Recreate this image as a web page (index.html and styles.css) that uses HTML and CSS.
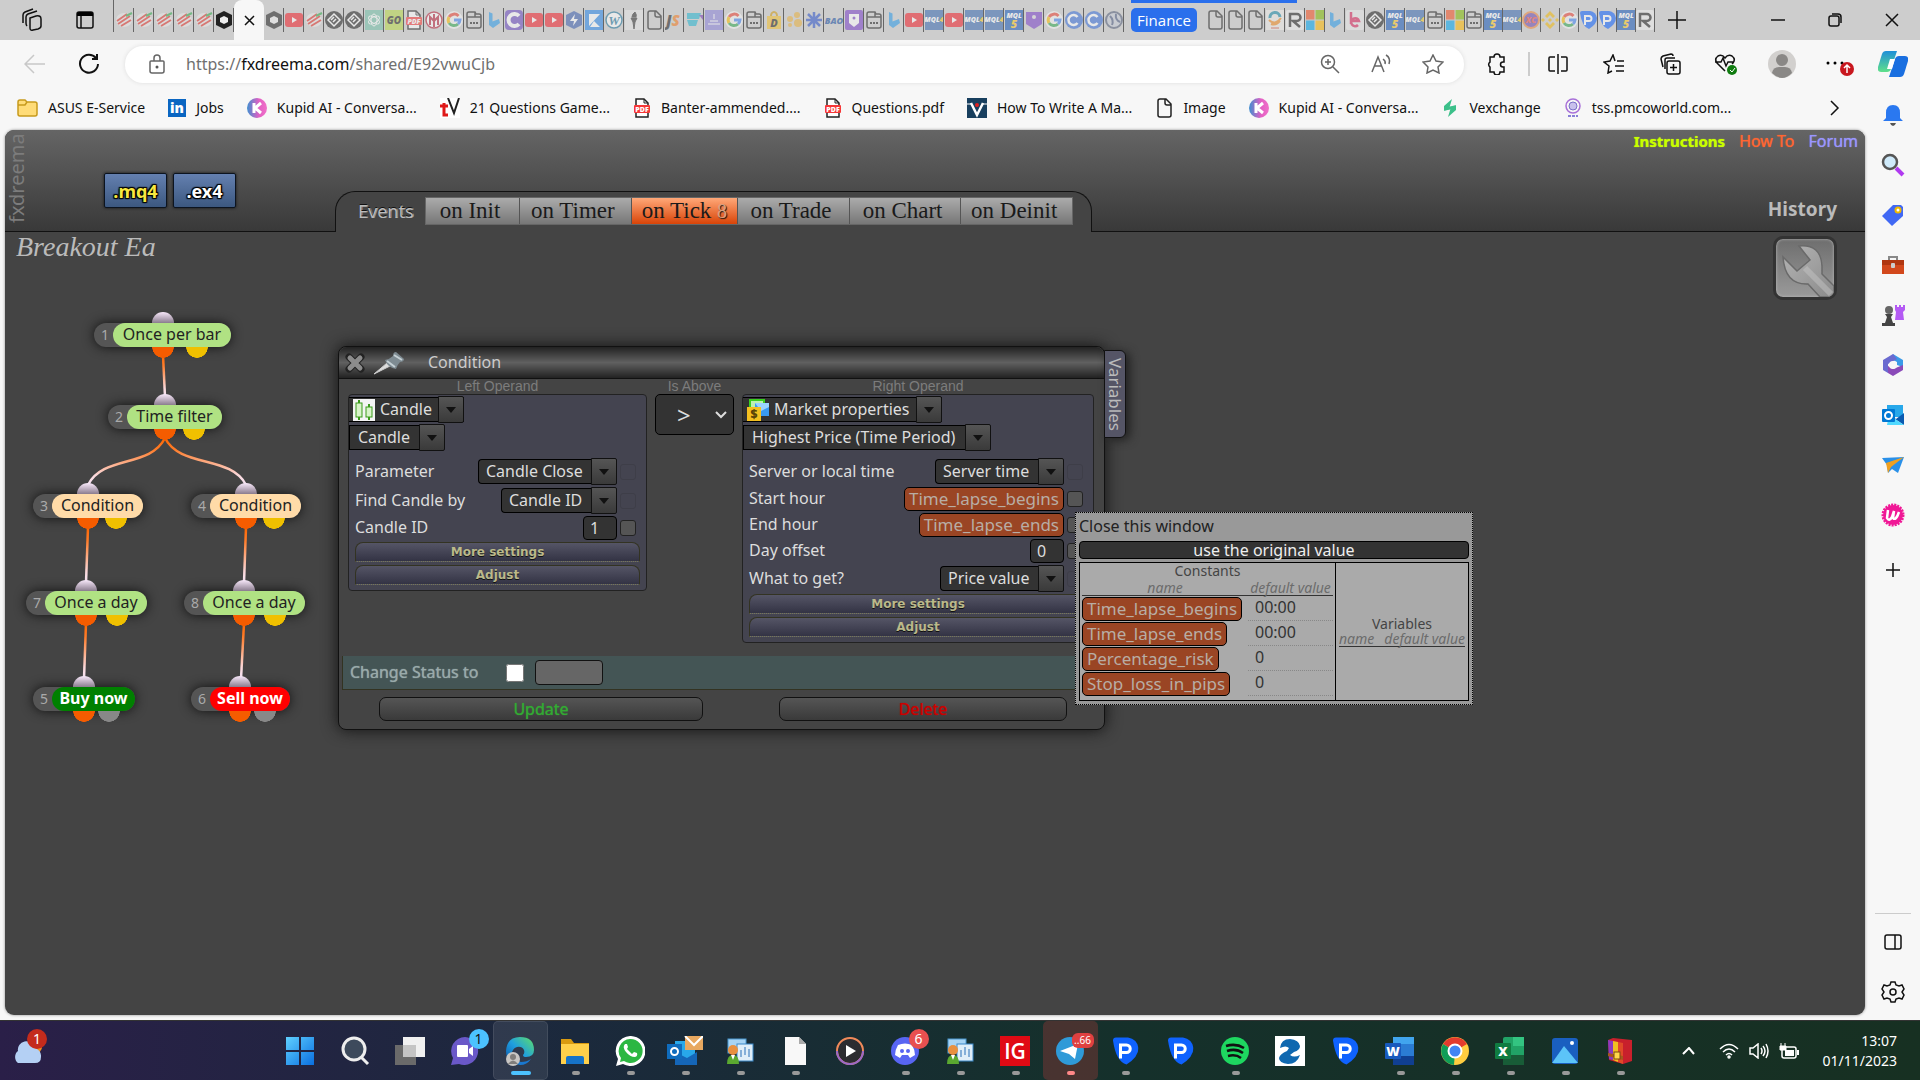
FILE: index.html
```html
<!DOCTYPE html>
<html lang="en">
<head>
<meta charset="utf-8">
<title>Breakout Ea - fxDreema</title>
<link rel="stylesheet" href="styles.css">
</head>
<body>
<svg class="defs" aria-hidden="true">
  <defs>
    <linearGradient id="g-wire" x1="0" y1="0" x2="0" y2="1"><stop offset="0" stop-color="#f60"/><stop offset=".25" stop-color="#ff7d2b"/><stop offset=".8" stop-color="#fbd9dc"/><stop offset="1" stop-color="#f6e6f8"/></linearGradient>
    <linearGradient id="g-kupid"><stop offset="0" stop-color="#3f8fd0"/><stop offset=".6" stop-color="#e35fc4"/><stop offset="1" stop-color="#f070c8"/></linearGradient>
    <linearGradient id="g-blue" x1="0" y1="0" x2="1" y2="1"><stop offset="0" stop-color="#5fd0ff"/><stop offset="1" stop-color="#0a6fe0"/></linearGradient>
    <linearGradient id="g-edge" x1="0" y1="1" x2="1" y2="0"><stop offset="0" stop-color="#0b50a8"/><stop offset=".5" stop-color="#1f9fe0"/><stop offset="1" stop-color="#5fe066"/></linearGradient>
    <linearGradient id="g-cop" x1="0" y1="0" x2="0" y2="1"><stop offset="0" stop-color="#1f8fd8"/><stop offset="1" stop-color="#5fe08a"/></linearGradient>
    <linearGradient id="g-steel" x1="0" y1="0" x2="1" y2="1"><stop offset="0" stop-color="#b5b5b5"/><stop offset="1" stop-color="#8a8a8a"/></linearGradient>
  </defs>
</svg>
<svg class="symbols" aria-hidden="true">
  <symbol id="t-strat" viewBox="0 0 18 20"><ellipse cx="9" cy="10" rx="8" ry="7" fill="#e8e8e8"/><path d="M2 11 12 4M3 14 15 6M6 16 16 10" stroke="#e0342c" stroke-width="2"/><path d="M11 6 17 3" stroke="#2fa84a" stroke-width="2"/></symbol>
  <symbol id="t-hex" viewBox="0 0 18 20"><path d="M9 1 17 5v10l-8 4-8-4V5z" fill="#222"/><path d="M9 6l4 2v4l-4 2-4-2V8z" fill="#eee"/></symbol>
  <symbol id="t-yt" viewBox="0 0 18 20"><rect y="3" width="18" height="14" rx="3" fill="#f0222a"/><path d="M7 7v6l5-3z" fill="#fff"/></symbol>
  <symbol id="t-feed" viewBox="0 0 18 20"><circle cx="9" cy="10" r="9" fill="#222"/><path d="M9 4 15 10 9 16 3 10zM6 10l3-3M8 12l3-3" fill="none" stroke="#fff" stroke-width="1.500"/></symbol>
  <symbol id="t-gpt" viewBox="0 0 18 20"><rect width="18" height="20" fill="#74c0a8"/><g fill="none" stroke="#fff"><ellipse cx="9" cy="10" rx="3" ry="6"/><ellipse cx="9" cy="10" rx="3" ry="6" transform="rotate(60 9 10)"/><ellipse cx="9" cy="10" rx="3" ry="6" transform="rotate(120 9 10)"/></g></symbol>
  <symbol id="t-go" viewBox="0 0 18 20"><rect width="18" height="20" fill="#b8d84a"/><text x="9" y="14" font-size="10" text-anchor="middle" class="b" fill="#222">GO</text></symbol>
  <symbol id="t-pdf" viewBox="0 0 18 20"><path d="M3 1h8l4 4v14H3z" fill="#fff" stroke="#222" stroke-width="1.500"/><path d="M11 1v4h4" fill="none" stroke="#222"/><rect x="1" y="7" width="16" height="8" rx="1" fill="#f63838"/><text x="9" y="14" font-size="7" text-anchor="middle" class="b" fill="#fff">PDF</text></symbol>
  <symbol id="t-mo" viewBox="0 0 18 20"><circle cx="9" cy="10" r="8" fill="#fff" stroke="#b8243c" stroke-width="1.500"/><path d="M5 15V7l4 4 4-4v8M9 4v13" fill="none" stroke="#b8243c" stroke-width="2"/></symbol>
  <symbol id="t-g" viewBox="0 0 18 20"><circle cx="9" cy="10" r="9" fill="#f4f4f4"/><g fill="none" stroke-width="3"><path d="M13.500 6A6 6 0 0 0 4 7" stroke="#ea4335"/><path d="M4 7a6 6 0 0 0 0 6" stroke="#fbbc05"/><path d="M4 13a6 6 0 0 0 9 1" stroke="#34a853"/><path d="M13 14a6 6 0 0 0 2-4H9" stroke="#4285f4"/></g></symbol>
  <symbol id="t-win" viewBox="0 0 18 20"><path d="M2 4q0-2 2-2h6l1 2h3q2 0 2 2v10q0 2-2 2H4q-2 0-2-2zM2 7h14M10 2v5" fill="none" stroke="#222" stroke-width="1.500"/><path d="M5 13h2M8 13h2M11 13h2" stroke="#222" stroke-width="2"/></symbol>
  <symbol id="t-bing" viewBox="0 0 18 20"><path d="M4 2l3.500 1.500v8L14 9l1 4-7 5-4-3z" fill="#2a9ae8"/></symbol>
  <symbol id="t-cc" viewBox="0 0 18 20"><rect width="18" height="20" rx="4" fill="#6a4ac0"/><path d="M14 6a6 6 0 1 0 0 8" fill="none" stroke="#fff" stroke-width="4"/></symbol>
  <symbol id="t-bolt" viewBox="0 0 18 20"><path d="M9 1 17 5v10l-8 4-8-4V5z" fill="#3c5fae"/><path d="M10 4 5 11h4l-1 5 5-7H9z" fill="#fff"/></symbol>
  <symbol id="t-z" viewBox="0 0 18 20"><rect width="18" height="20" fill="#2a88ea"/><path d="M4 4h11L4 16zM9 11l6 6H5z" fill="#fff"/></symbol>
  <symbol id="t-wp" viewBox="0 0 18 20"><circle cx="9" cy="10" r="8" fill="#fff" stroke="#21759b" stroke-width="1.500"/><text x="9" y="15" font-size="13" text-anchor="middle" class="sb" fill="#21759b">W</text></symbol>
  <symbol id="t-torch" viewBox="0 0 18 20"><rect width="18" height="20" fill="#e6e6e6"/><path d="M6 8h6l-2 4-1 7-1-7zM7 7q0-3 3-5 2 3 1 5z" fill="#333" stroke="#333"/></symbol>
  <symbol id="t-file" viewBox="0 0 18 20"><path d="M3 3q0-2 2-2h6l5 5v11q0 2-2 2H5q-2 0-2-2zM10 1v4q0 2 2 2h4" fill="none" stroke="#222" stroke-width="1.500"/></symbol>
  <symbol id="t-js" viewBox="0 0 18 20"><text x="1" y="16" font-size="15" class="b" fill="#222">J<tspan fill="#f07a20">S</tspan></text></symbol>
  <symbol id="t-teal" viewBox="0 0 18 20"><path d="M2 3h14l-2 6H2zM2 10h11l-2 6H4z" fill="#27b4d0"/><path d="M14 5h4v5z" fill="#7a3ab8"/></symbol>
  <symbol id="t-amz" viewBox="0 0 18 20"><rect width="18" height="20" fill="#8b83d8"/><path d="M3 14h12M5 11h8M9 4v5" stroke="#fff"/></symbol>
  <symbol id="t-bag" viewBox="0 0 18 20"><path d="M2 6h14v13H2z" fill="#f2c030"/><path d="M6 6a3 4 0 0 1 6 0" fill="none" stroke="#d09a10" stroke-width="2"/><text x="9" y="17" font-size="11" text-anchor="middle" class="b" fill="#222">D</text></symbol>
  <symbol id="t-dots" viewBox="0 0 18 20"><g fill="#e8b040"><circle cx="12" cy="5" r="3"/><circle cx="5" cy="9" r="3"/><circle cx="13" cy="13" r="4"/><circle cx="5" cy="15" r="2"/></g></symbol>
  <symbol id="t-snow" viewBox="0 0 18 20"><path d="M9 2v16M1 10h16M3 4l12 12M15 4 3 16" stroke="#2f55c8" stroke-width="2.500"/></symbol>
  <symbol id="t-bao" viewBox="0 0 18 20"><text x="9" y="14" font-size="9" text-anchor="middle" class="b" fill="#1a50a0">BAO</text></symbol>
  <symbol id="t-badge" viewBox="0 0 18 20"><rect width="18" height="20" rx="2" fill="#7a42c8"/><path d="M4 4h10v9l-5 4-5-4z" fill="#fff"/><circle cx="9" cy="8" r="1.500" fill="#7a42c8"/></symbol>
  <symbol id="t-badge2" viewBox="0 0 18 20"><path d="M1 2h16v12l-8 5-8-5z" fill="#7a42c8"/><circle cx="9" cy="7" r="2" fill="#ddd"/></symbol>
  <symbol id="t-mql4" viewBox="0 0 18 20"><rect width="18" height="20" fill="#3a6ab0"/><text x="9" y="12" font-size="7" text-anchor="middle" class="b" fill="#fff">MQL<tspan fill="#ffc820">4</tspan></text></symbol>
  <symbol id="t-mql5" viewBox="0 0 18 20"><rect width="18" height="20" fill="#1a5ab8"/><text x="9" y="8" font-size="7" text-anchor="middle" class="b" fill="#fff">MQL</text><text x="9" y="18" font-size="11" text-anchor="middle" class="b" fill="#ffc820">5</text></symbol>
  <symbol id="t-c" viewBox="0 0 18 20"><circle cx="9" cy="10" r="9" fill="#3a70d8"/><path d="M12.500 7a5 5 0 1 0 0 6" fill="none" stroke="#fff" stroke-width="2.500"/></symbol>
  <symbol id="t-globe" viewBox="0 0 18 20"><circle cx="9" cy="10" r="8" fill="#c4cad6" stroke="#55607a" stroke-width="2"/><path d="M5 6q4 4 2 9M11 4q-1 6 4 8" fill="none" stroke="#4b5a80" stroke-width="2"/></symbol>
  <symbol id="t-swirl" viewBox="0 0 18 20"><rect width="18" height="20" fill="#ecebe8"/><path d="M4 8a5 5 0 0 1 10-1" fill="none" stroke="#1a8aa8" stroke-width="3"/><path d="M3 10q6 6 12-2M5 14q5 2 9-3" fill="none" stroke="#f08a20" stroke-width="2"/><path d="M5 18h8" stroke="#d04a30"/></symbol>
  <symbol id="t-r" viewBox="0 0 18 20"><rect width="18" height="20" rx="2" fill="#eee"/><path d="M4 17V4h7a3.500 3.500 0 0 1 0 7H7l7 6" fill="none" stroke="#222" stroke-width="2.500"/></symbol>
  <symbol id="t-ms" viewBox="0 0 18 20"><path d="M0 0h8.500v9.500H0z" fill="#f25022"/><path d="M9.500 0H18v9.500H9.500z" fill="#7fba00"/><path d="M0 10.500h8.500V20H0z" fill="#00a4ef"/><path d="M9.500 10.500H18V20H9.500z" fill="#ffb900"/></symbol>
  <symbol id="t-e" viewBox="0 0 18 20"><rect width="18" height="20" rx="2" fill="#e8e8e8"/><path d="M5 2v12M6 11h7a4 4 0 1 0-1 4" fill="none" stroke="#d8245a" stroke-width="2.500"/></symbol>
  <symbol id="t-xc" viewBox="0 0 18 20"><circle cx="9" cy="10" r="8" fill="#6a4ab0" stroke="#f0883a" stroke-width="2"/><text x="9" y="13" font-size="8" text-anchor="middle" class="b" fill="#f04a3a">XC</text></symbol>
  <symbol id="t-bnb" viewBox="0 0 18 20"><path d="M9 1l5 5-2 2-3-3-3 3-2-2zM9 19l5-5-2-2-3 3-3-3-2 2zM9 8l2 2-2 2-2-2zM2 8l2 2-2 2-2-2zM16 8l2 2-2 2-2-2z" fill="#f0b90b"/></symbol>
  <symbol id="t-p" viewBox="0 0 18 20"><path d="M1 3q0-2 2-2h8q6 1 7 7 0 6-8 11Q3 17 1 3z" fill="#0f62fe"/><path d="M6 15V6h4a2.500 2.500 0 0 1 0 5H7" fill="none" stroke="#fff" stroke-width="2"/></symbol>
</svg>

<div class="browser">
  <nav class="tabs" aria-label="Tabs">
    <button class="tool" aria-label="Workspaces"><svg width="22" height="24" viewBox="0 0 22 24"><path d="M9 10 15 8q5-1 5 3v7q0 2-3 3l-5 1q-3 1-3-2zM6 18q-1-1-1-3V9q0-2 2-3l9-3M2 15V7q0-2 2-3l8-3" class="ln"/></svg></button>
    <button class="tool" aria-label="Tab actions"><svg width="20" height="20" viewBox="0 0 20 20"><rect x="2" y="2" width="16" height="16" rx="2" class="ln"/><path d="M2 6V4q0-2 2-2h12q2 0 2 2v2z"/><path d="M6 6v12" class="ln"/></svg></button>
    <div class="strip lead">
      <i><svg><use href="#t-strat"/></svg></i><i><svg><use href="#t-strat"/></svg></i><i><svg><use href="#t-strat"/></svg></i><i><svg><use href="#t-strat"/></svg></i><i><svg><use href="#t-strat"/></svg></i><i class="vivid"><svg><use href="#t-hex"/></svg></i>
    </div>
    <div class="active"><button aria-label="Close tab"><svg width="11" height="11" viewBox="0 0 11 11"><path d="M1 1l9 9M10 1l-9 9" class="ln"/></svg></button></div>
    <div class="strip">
      <i><svg><use href="#t-hex"/></svg></i><i><svg><use href="#t-yt"/></svg></i><i><svg><use href="#t-strat"/></svg></i><i><svg><use href="#t-feed"/></svg></i><i><svg><use href="#t-feed"/></svg></i><i><svg><use href="#t-gpt"/></svg></i><i><svg><use href="#t-go"/></svg></i><i><svg><use href="#t-pdf"/></svg></i><i><svg><use href="#t-mo"/></svg></i><i><svg><use href="#t-g"/></svg></i><i><svg><use href="#t-win"/></svg></i><i><svg><use href="#t-bing"/></svg></i><i><svg><use href="#t-cc"/></svg></i><i><svg><use href="#t-yt"/></svg></i><i><svg><use href="#t-yt"/></svg></i><i><svg><use href="#t-bolt"/></svg></i><i><svg><use href="#t-z"/></svg></i><i><svg><use href="#t-wp"/></svg></i><i><svg><use href="#t-torch"/></svg></i><i><svg><use href="#t-file"/></svg></i><i><svg><use href="#t-js"/></svg></i><i><svg><use href="#t-teal"/></svg></i><i><svg><use href="#t-amz"/></svg></i><i><svg><use href="#t-g"/></svg></i><i><svg><use href="#t-win"/></svg></i><i><svg><use href="#t-bag"/></svg></i><i><svg><use href="#t-dots"/></svg></i><i><svg><use href="#t-snow"/></svg></i><i><svg><use href="#t-bao"/></svg></i><i><svg><use href="#t-badge"/></svg></i><i><svg><use href="#t-win"/></svg></i><i><svg><use href="#t-bing"/></svg></i><i><svg><use href="#t-yt"/></svg></i><i><svg><use href="#t-mql4"/></svg></i><i><svg><use href="#t-yt"/></svg></i><i><svg><use href="#t-mql4"/></svg></i><i><svg><use href="#t-mql4"/></svg></i><i><svg><use href="#t-mql5"/></svg></i><i><svg><use href="#t-badge2"/></svg></i><i><svg><use href="#t-g"/></svg></i><i><svg><use href="#t-c"/></svg></i><i><svg><use href="#t-c"/></svg></i><i><svg><use href="#t-globe"/></svg></i>
    </div>
    <div class="group">
      <button class="chip">Finance</button>
      <div class="strip"><i><svg><use href="#t-file"/></svg></i><i><svg><use href="#t-file"/></svg></i><i><svg><use href="#t-file"/></svg></i><i><svg><use href="#t-swirl"/></svg></i></div>
    </div>
    <div class="strip"><i><svg><use href="#t-r"/></svg></i><i><svg><use href="#t-ms"/></svg></i><i><svg><use href="#t-bing"/></svg></i><i><svg><use href="#t-e"/></svg></i><i><svg><use href="#t-feed"/></svg></i><i><svg><use href="#t-mql5"/></svg></i><i><svg><use href="#t-mql4"/></svg></i><i><svg><use href="#t-win"/></svg></i><i><svg><use href="#t-ms"/></svg></i></div>
    <div class="strip slim"><i><svg><use href="#t-win"/></svg></i><i><svg><use href="#t-mql5"/></svg></i><i><svg><use href="#t-mql4"/></svg></i><i><svg><use href="#t-xc"/></svg></i><i><svg><use href="#t-bnb"/></svg></i><i><svg><use href="#t-g"/></svg></i><i><svg><use href="#t-p"/></svg></i><i><svg><use href="#t-p"/></svg></i><i><svg><use href="#t-mql5"/></svg></i><i><svg><use href="#t-r"/></svg></i></div>
    <button class="tool plus" aria-label="New tab"><svg width="18" height="18" viewBox="0 0 18 18"><path d="M9 0v18M0 9h18" class="ln"/></svg></button>
    <div class="wincontrols">
      <button aria-label="Minimize"><svg width="14" height="14" viewBox="0 0 14 14"><path d="M0 7h14" class="ln"/></svg></button>
      <button aria-label="Restore"><svg width="14" height="14" viewBox="0 0 14 14"><rect x="1" y="3" width="10" height="10" rx="2" class="ln"/><path d="M4 1h6q3 0 3 3v6" class="ln"/></svg></button>
      <button aria-label="Close"><svg width="14" height="14" viewBox="0 0 14 14"><path d="M1 1l12 12M13 1 1 13" class="ln"/></svg></button>
    </div>
  </nav>

  <div class="toolbar">
    <button class="nav" aria-label="Back"><svg width="22" height="20" viewBox="0 0 22 20"><path d="M21 10H1M10 1l-9 9 9 9" class="ln"/></svg></button>
    <button class="nav" aria-label="Refresh"><svg width="22" height="22" viewBox="0 0 22 22"><path d="M18 5A9 9 0 1 0 20 11M19 1v5h-5" class="ln"/></svg></button>
    <div class="address">
      <svg width="16" height="20" viewBox="0 0 16 20"><path d="M2 7h12q1 0 1 1v9q0 2-2 2H3q-2 0-2-2V8q0-1 1-1zM5 7V4a3 3 0 0 1 6 0v3" class="ln gray"/><circle cx="8" cy="13" r="1.500" fill="#555"/></svg>
      <label class="url" for="url">https://<b>fxdreema.com</b>/shared/E92vwuCjb</label>
      <input id="url">
      <svg width="20" height="20" viewBox="0 0 20 20"><path d="M13 13l6 6M8 5v6M5 8h6" class="ln gray"/><circle cx="8" cy="8" r="6.500" class="ln gray"/></svg>
      <svg width="22" height="20" viewBox="0 0 22 20"><path d="M2 18 8 3l6 15M4 12h8M13 5q3 2 2 5M16 1q5 3 3 9" class="ln gray"/></svg>
      <svg width="22" height="20" viewBox="0 0 22 20"><path d="M11 1l3 6 7 1-5 5 1 6-6-3-6 3 1-6-5-5 7-1z" class="ln gray"/></svg>
    </div>
    <button class="ext" aria-label="Extensions"><svg width="22" height="22" viewBox="0 0 22 22"><path d="M5 4h4a3 3 0 0 1 6 0h4v5h-1a2 2 0 0 0 0 5h1v5h-4a3 3 0 0 1-6 0H5v-5a3 3 0 0 1 0-5z" class="ln"/></svg></button>
    <button aria-label="Split screen"><svg width="22" height="20" viewBox="0 0 22 20"><path d="M8 3H3q-1 0-1 1v12q0 1 1 1h5M14 3h5q1 0 1 1v12q0 1-1 1h-5M11 0v20" class="ln"/></svg></button>
    <button aria-label="Favorites"><svg width="22" height="20" viewBox="0 0 22 20"><path d="M12 7l-2-6-3 6-6 1 5 4-1 7 4-2M14 7h7M12 12h9M13 17h8" class="ln"/></svg></button>
    <button aria-label="Collections"><svg width="22" height="22" viewBox="0 0 22 22"><path d="M4 14 2 6q0-2 2-3l8-2q2 0 2 2M6 16V7q0-2 2-2h8" class="ln"/><rect x="8" y="8" width="13" height="13" rx="2" class="ln"/><path d="M14.500 11v7M11 14.500h7" class="ln"/></svg></button>
    <button aria-label="Browser essentials"><svg width="24" height="22" viewBox="0 0 24 22"><path d="M11 18 3 10q-3-4 1-7 4-2 7 2 3-4 7-2 4 3 1 7l-1 1M1 9h6l2-4 3 8 2-4h6" class="ln"/><circle cx="18" cy="17" r="5" fill="#107c10"/><path d="M16 17l2 2 3-4" stroke="#fff" fill="none"/></svg></button>
    <button aria-label="Profile"><svg width="28" height="28" viewBox="0 0 28 28"><circle cx="14" cy="14" r="14" fill="#d2d0ce"/><circle cx="14" cy="10" r="6" fill="#8a8886"/><path d="M4 23q1-6 7-6h6q6 0 7 6-5 5-10 5T4 23z" fill="#8a8886"/></svg></button>
    <button aria-label="Settings and more"><svg width="32" height="24" viewBox="0 0 32 24"><circle cx="6" cy="11" r="1.500"/><circle cx="13" cy="11" r="1.500"/><circle cx="20" cy="11" r="1.500"/><circle cx="25" cy="17" r="7" fill="#c8171e"/><path d="M25 21v-8M22 16l3-3 3 3" stroke="#fff" stroke-width="1.500" fill="none"/></svg></button>
    <button aria-label="Copilot"><svg width="30" height="28" viewBox="0 0 30 28"><path d="M8 1h11l-6 18q-1 3-4 3H3q-4 0-3-5L4 4q1-3 4-3z" fill="url(#g-cop)"/><path d="M22 27H11l6-18q1-3 4-3h6q4 0 3 5l-4 13q-1 3-4 3z" fill="#1a6fe0"/><path d="M12 9h5l-3 10h-5z" fill="#fff"/></svg></button>
  </div>

  <div class="bookmarks">
    <a href="#"><svg width="21" height="18" viewBox="0 0 21 18"><path d="M1 3q0-2 2-2h5l2 2h8q2 0 2 2v10q0 2-2 2H3q-2 0-2-2z" fill="#ffdc78" stroke="#c79a1c" stroke-width="1.500"/><path d="M1 6h7l2-3" fill="none" stroke="#c79a1c" stroke-width="1.500"/></svg>ASUS E-Service</a>
    <a href="#"><svg width="18" height="18" viewBox="0 0 18 18"><rect width="18" height="18" fill="#0a66c2"/><text x="9" y="14" font-size="14" text-anchor="middle" class="b" fill="#fff">in</text></svg>Jobs</a>
    <a href="#"><svg width="20" height="20" viewBox="0 0 20 20"><circle cx="10" cy="10" r="10" fill="url(#g-kupid)"/><path d="M7 5v10M14 5l-6 5 6 5" stroke="#fff" stroke-width="3" fill="none"/></svg>Kupid AI - Conversa...</a>
    <a href="#"><svg width="20" height="20" viewBox="0 0 20 20"><rect width="20" height="20" fill="#fff"/><path d="M4 5v12h4M0 8h8" stroke="#e01a1a" stroke-width="3" fill="none"/><path d="M8 0l6 15L19 0" stroke="#222" stroke-width="2" fill="none"/></svg>21 Questions Game...</a>
    <a href="#"><svg width="18" height="20"><use href="#t-pdf"/></svg>Banter-ammended....</a>
    <a href="#"><svg width="18" height="20"><use href="#t-pdf"/></svg>Questions.pdf</a>
    <a href="#"><svg width="20" height="20" viewBox="0 0 20 20"><rect width="20" height="20" fill="#183f5e"/><path d="M4 5l6 12 6-12" stroke="#fff" stroke-width="2.500" fill="none"/><path d="M0 6h5M15 6h5" stroke="#fff"/><circle cx="10" cy="7" r="2" fill="#e02020"/></svg>How To Write A Ma...</a>
    <a href="#"><svg width="18" height="20"><use href="#t-file"/></svg>Image</a>
    <a href="#"><svg width="20" height="20" viewBox="0 0 20 20"><circle cx="10" cy="10" r="10" fill="url(#g-kupid)"/><path d="M7 5v10M14 5l-6 5 6 5" stroke="#fff" stroke-width="3" fill="none"/></svg>Kupid AI - Conversa...</a>
    <a href="#"><svg width="18" height="20" viewBox="0 0 18 20"><path d="M11 1 3 8v5l5-2zM7 19l8-7V7l-5 2z" fill="#3cc08a"/><path d="M4 11l10-2" stroke="#3cc08a" stroke-width="3"/></svg>Vexchange</a>
    <a href="#"><svg width="18" height="20" viewBox="0 0 18 20"><circle cx="9" cy="8" r="7" fill="none" stroke="#a870d8" stroke-width="1.500"/><circle cx="9" cy="8" r="4" fill="#c8c0ec" stroke="#7a70c8"/><path d="M4 18h10" stroke="#8a80d8" stroke-width="2" stroke-dasharray="3 1"/></svg>tss.pmcoworld.com...</a>
    <button aria-label="More bookmarks"><svg width="10" height="16" viewBox="0 0 10 16"><path d="M1 1l7 7-7 7" class="ln"/></svg></button>
  </div>

  <div class="body">
    <main class="page">
      <header class="head">
        <div class="left">
          <span class="brand">fxdreema</span>
          <button class="dl yellow">.mq4</button><button class="dl">.ex4</button>
        </div>
        <div class="events">
          <span class="cap">Events</span>
          <div class="evs"><button>on Init</button><button class="w2">on Timer</button><button class="on w2">on Tick <small>8</small></button><button class="w2">on Trade</button><button class="w2">on Chart</button><button class="w2">on Deinit</button></div>
        </div>
        <div class="right">
          <nav class="links"><a href="#" class="ins">Instructions</a><a href="#" class="how">How To</a><a href="#" class="forum">Forum</a></nav>
          <a href="#" class="history">History</a>
        </div>
      </header>

      <section class="canvas">
        <div class="canvashead">
          <h1>Breakout Ea</h1>
          <button class="wrench" aria-label="Settings"><svg width="58" height="58" viewBox="0 0 58 58"><path d="M23 7q22-2 23 20l0 8 12 12v11H44L32 45Q9 46 7 18l14 14 13-11z" fill="url(#g-steel)" stroke="#6a6a6a" stroke-width="1.500"/><path d="M29 29l26 26" stroke="#c4c4c4" stroke-width="6" opacity=".5"/></svg></button>
        </div>

        <svg class="wires" width="330" height="480" viewBox="0 0 330 480" fill="none" stroke="url(#g-wire)" stroke-width="2.500">
          <path d="M158 122 160 164"/><path d="M160 205C145 235 98 222 83 252"/><path d="M160 205C175 235 226 222 241 252"/>
          <path d="M83 294 81 350"/><path d="M241 294 239 350"/><path d="M81 390 79 446"/><path d="M239 390 236 446"/>
        </svg>
        <div class="node n1"><em>1</em><span>Once per bar</span></div>
        <div class="node n2"><em>2</em><span>Time filter</span></div>
        <div class="node n3 cond"><em>3</em><span>Condition</span></div>
        <div class="node n4 cond"><em>4</em><span>Condition</span></div>
        <div class="node n7"><em>7</em><span>Once a day</span></div>
        <div class="node n8"><em>8</em><span>Once a day</span></div>
        <div class="node n5 buy"><em>5</em><span>Buy now</span></div>
        <div class="node n6 sell"><em>6</em><span>Sell now</span></div>

        <section class="dialog">
          <button class="vars">Variables</button>
          <div class="bar">
            <button aria-label="Close"><svg width="20" height="20" viewBox="0 0 20 20"><path d="M4 4l12 12M16 4 4 16" stroke="#222" stroke-width="7" stroke-linecap="round"/><path d="M5 5l10 10M15 5 5 15" stroke="#8c8c8c" stroke-width="5" stroke-linecap="round"/></svg></button>
            <button aria-label="Pin"><svg width="32" height="24" viewBox="0 0 32 24"><path d="M1 23 14 12l3 3z" fill="#ddd" stroke="#ccc"/><path d="M12 9q5-1 8-4 0-4 3-4l8 7q0 3-4 3-3 3-4 7-8-1-11-9z" fill="#7e8b92"/><path d="M14 10l8 6M21 4l8 5" stroke="#c5d0d5" stroke-width="2"/></svg></button>
            <h2>Condition</h2>
          </div>
          <div class="cols">
            <div class="operand">
              <h3>Left Operand</h3>
              <div class="panel">
                <div class="pick src"><svg width="22" height="22" viewBox="0 0 22 22"><rect width="22" height="22" fill="#f4f4f4"/><path d="M6 1v20M16 5v16" stroke="#3a9a1a" stroke-width="2"/><rect x="3" y="4" width="6" height="14" fill="#d8f4c8" stroke="#3a9a1a"/><rect x="13" y="8" width="6" height="10" fill="#d8f4c8" stroke="#3a9a1a"/></svg><select aria-label="Source"><option>Candle</option></select><i></i></div>
                <div class="pick"><select aria-label="Type"><option>Candle</option></select><i></i></div>
                <div class="rows">
                  <div class="row"><label for="p1">Parameter</label><div class="pick round"><select id="p1"><option>Candle Close</option></select><i></i></div><button class="sq off" aria-label="Variable"></button></div>
                  <div class="row"><label for="p2">Find Candle by</label><div class="pick round"><select id="p2"><option>Candle ID</option></select><i></i></div><button class="sq off" aria-label="Variable"></button></div>
                  <div class="row"><label for="p3">Candle ID</label><input id="p3" class="num" value="1"><button class="sq" aria-label="Variable"></button></div>
                  <button class="more">More settings</button>
                  <button class="more">Adjust</button>
                </div>
              </div>
            </div>
            <div class="operator">
              <h3>Is Above</h3>
              <div class="cmp"><select aria-label="Operator"><option>&gt;</option></select><svg width="12" height="8" viewBox="0 0 12 8"><path d="M1 1l5 5 5-5" stroke="#ddd" stroke-width="2" fill="none"/></svg></div>
            </div>
            <div class="operand wide">
              <h3>Right Operand</h3>
              <div class="panel">
                <div class="pick src"><svg width="22" height="22" viewBox="0 0 22 22"><rect x="3" y="1" width="14" height="12" fill="#bdf0b0" stroke="#3ad020" stroke-width="2"/><rect x="8" y="4" width="14" height="13" fill="#3a9af0"/><path d="M8 4h14v4l-8 4z" fill="#9ad4ff"/><rect x="0" y="8" width="14" height="14" fill="#f4c020"/><text x="7" y="19" font-size="12" text-anchor="middle" class="b" fill="#5a4408">$</text></svg><select aria-label="Source"><option>Market properties</option></select><i></i></div>
                <div class="pick"><select aria-label="Type"><option>Highest Price (Time Period)</option></select><i></i></div>
                <div class="rows">
                  <div class="row"><label for="q1">Server or local time</label><div class="pick round"><select id="q1"><option>Server time</option></select><i></i></div><button class="sq off" aria-label="Variable"></button></div>
                  <div class="row"><label for="q2">Start hour</label><button id="q2" class="tag">Time_lapse_begins</button><button class="sq" aria-label="Variable"></button></div>
                  <div class="row"><label for="q3">End hour</label><button id="q3" class="tag">Time_lapse_ends</button><button class="sq" aria-label="Variable"></button></div>
                  <div class="row"><label for="q4">Day offset</label><input id="q4" class="num" value="0"><button class="sq" aria-label="Variable"></button></div>
                  <div class="row"><label for="q5">What to get?</label><div class="pick round"><select id="q5"><option>Price value</option></select><i></i></div><button class="sq off" aria-label="Variable"></button></div>
                  <button class="more">More settings</button>
                  <button class="more">Adjust</button>
                </div>
              </div>
            </div>
          </div>
          <div class="status"><label for="st">Change Status to</label><input type="checkbox" id="st"><input class="stval" aria-label="Status"></div>
          <div class="acts"><button class="upd">Update</button><button class="del">Delete</button></div>
        </section>

        <section class="popup">
          <a href="#">Close this window</a>
          <button>use the original value</button>
          <div class="tables">
            <table class="consts">
              <caption>Constants</caption>
              <thead><tr><th>name</th><th>default value</th></tr></thead>
              <tbody>
                <tr><td><button class="tag">Time_lapse_begins</button></td><td>00:00</td></tr>
                <tr><td><button class="tag">Time_lapse_ends</button></td><td>00:00</td></tr>
                <tr><td><button class="tag">Percentage_risk</button></td><td>0</td></tr>
                <tr><td><button class="tag">Stop_loss_in_pips</button></td><td>0</td></tr>
              </tbody>
            </table>
            <div class="varcol">
              <table><caption>Variables</caption><thead><tr><th>name</th><th>default value</th></tr></thead></table>
            </div>
          </div>
        </section>
      </section>
    </main>

    <aside class="side">
      <svg viewBox="0 0 24 24"><path d="M12 2q7 0 7 8v5l3 3H2l3-3v-5q0-8 7-8z" fill="#2a78f0"/><path d="M9 20h6q-1 3-3 3t-3-3z" fill="#555"/></svg>
      <svg viewBox="0 0 24 24"><circle cx="9" cy="9" r="7" fill="#cfeafa" stroke="#555" stroke-width="2.500"/><path d="M15 15l7 7" stroke="#b03af0" stroke-width="4"/></svg>
      <svg viewBox="0 0 24 24"><path d="M12 2h8l2 2v9L11 23 1 13z" fill="#4068f4"/><circle cx="17" cy="7" r="2.500" fill="#fff" stroke="#f0b800" stroke-width="2"/></svg>
      <svg viewBox="0 0 24 24"><path d="M8 7V4h8v3" fill="none" stroke="#888" stroke-width="2"/><path d="M1 7h22v14H1z" fill="#d2481c"/><path d="M1 7h22v5H1z" fill="#b03610"/><rect x="10" y="10" width="4" height="5" rx="1" fill="#ccc"/></svg>
      <svg viewBox="0 0 24 24"><path d="M14 2h2v2h2V2h2v2h2V2h2v5l-2 2 1 8h-9l1-8-1-2z" fill="#b45af4"/><circle cx="8" cy="7" r="4" fill="#666"/><path d="M4 11h8l-2 3 2 6h2v3H1v-3h3l2-6z" fill="#444"/></svg>
      <svg viewBox="0 0 24 24"><path d="M12 1l10 6v7l-6-2V9l-6-3z" fill="#3a9ae8"/><path d="M12 1 2 7v10l5 3V11l9-5z" fill="#6a6ad0"/><path d="M7 20l5 3 10-6v-5l-10 4-5-3z" fill="#8a4ab8"/><circle cx="12" cy="12" r="4" fill="#f7f7f7"/></svg>
      <svg viewBox="0 0 24 24"><rect x="6" y="2" width="16" height="12" fill="#28a8ea"/><path d="M8 12l15 10V10l-8 6z" fill="#0a5ab0"/><path d="M6 22h17L8 12z" fill="#50d9ff"/><rect x="1" y="6" width="13" height="13" rx="1" fill="#0078d4"/><circle cx="7.500" cy="12.500" r="3.500" fill="none" stroke="#fff" stroke-width="2"/></svg>
      <svg viewBox="0 0 24 24"><path d="M1 5l22-1-6 16-6-4-4 4-1-8z" fill="#2a90e8"/><path d="M5 10 23 4 10 14l-3 6z" fill="#f0a020"/></svg>
      <svg viewBox="0 0 24 24"><circle cx="12" cy="12" r="10" fill="#f01896" stroke="#f01896" stroke-width="3" stroke-dasharray="2 1"/><path d="M7 7 6 15q2 4 5-1l2-6-1 7q3 3 6-6" fill="none" stroke="#fff" stroke-width="2.500"/></svg>
      <svg class="add" viewBox="0 0 24 24"><path d="M12 5v14M5 12h14" class="ln"/></svg>
      <div class="bottom">
        <svg viewBox="0 0 24 24"><rect x="4" y="5" width="16" height="14" rx="2" class="ln"/><path d="M14 5v14" class="ln"/></svg>
        <svg viewBox="0 0 24 24"><circle cx="12" cy="12" r="3" class="ln"/><path d="M10 2h4l1 3 3 1 3-1 2 4-2 3 2 3-2 4-3-1-3 1-1 3h-4l-1-3-3-1-3 1-2-4 2-3-2-3 2-4 3 1 3-1z" class="ln"/></svg>
      </div>
    </aside>
  </div>
</div>

<footer class="taskbar">
  <div class="weather"><svg width="36" height="40" viewBox="0 0 36 40"><circle cx="24" cy="22" r="6" fill="#f09020"/><path d="M6 38a6 7 0 0 1 0-12 8 8 0 0 1 16-3 8 8 0 0 1 7 9q0 6-6 6z" fill="#b4d0f4"/></svg><b>1</b></div>
  <div class="apps">
    <button aria-label="Start"><svg viewBox="0 0 30 30"><path d="M1 1h13v13H1zM16 1h13v13H16zM1 16h13v13H1zM16 16h13v13H16z" fill="url(#g-blue)"/></svg></button>
    <button aria-label="Search"><svg viewBox="0 0 30 30"><circle cx="14" cy="13" r="11" fill="#3d4a5c" stroke="#eee" stroke-width="3"/><path d="M21 21l7 7" stroke="#eee" stroke-width="3"/></svg></button>
    <button aria-label="Task view"><svg viewBox="0 0 30 30"><rect x="0" y="9" width="21" height="20" fill="#6a6a6a"/><rect x="8" y="1" width="22" height="20" fill="#f0f0f0"/><rect x="8" y="9" width="13" height="12" fill="#c4c4c4"/></svg></button>
    <button aria-label="Chat"><svg viewBox="0 0 30 30"><path d="M15 1a14 14 0 1 1-6 27L1 29l2-7A14 14 0 0 1 15 1z" fill="#6a58c8"/><rect x="7" y="9" width="11" height="12" rx="1" fill="#fff"/><path d="M19 13l4-3v10l-4-3z" fill="#fff"/></svg><b class="cyan">1</b></button>
    <button class="cur run" aria-label="Edge"><svg viewBox="0 0 30 30"><path d="M15 1q14 0 14 13 0 7-8 7-3 0-3-2 2-2 1-5-2-4-7-3-6 2-5 9 1 7 9 9Q1 28 1 15 2 1 15 1z" fill="url(#g-edge)"/><path d="M7 16q1 9 9 10 6 0 10-3-4 6-11 6-8-3-8-13z" fill="#1a78d0"/><circle cx="8" cy="23" r="7" fill="#c8c6c4"/><circle cx="8" cy="21" r="3" fill="#807e7c"/><path d="M3 28q5-7 10 0z" fill="#807e7c"/></svg></button>
    <button class="run" aria-label="Explorer"><svg viewBox="0 0 30 30"><path d="M1 3h10l3 4h15v8H1z" fill="#d99a10"/><path d="M1 8h28v20H1z" fill="#ffd04a"/><path d="M6 28v-6q0-2 2-2h14q2 0 2 2v6z" fill="#1673c8"/></svg></button>
    <button class="run" aria-label="WhatsApp"><svg viewBox="0 0 30 30"><path d="M15 0a15 15 0 1 1-7 28l-7 2 2-7A15 15 0 0 1 15 0z" fill="#fff"/><path d="M15 3a12 12 0 1 1-6 22l-4 1 1-4A12 12 0 0 1 15 3z" fill="#2cb742"/><path d="M10 8q-3 3 1 8t9 5q3-1 2-4l-3-1-2 2-5-5 1-2-1-3z" fill="#fff"/></svg></button>
    <button class="run wideicon" aria-label="Outlook"><svg viewBox="0 0 36 30"><rect x="8" y="5" width="20" height="23" fill="#28a8ea"/><path d="M8 16l12 6 10-6v13H8z" fill="#1566b8"/><rect x="0" y="8" width="15" height="15" fill="#0f6cbd"/><circle cx="7.500" cy="15.500" r="3.500" fill="none" stroke="#fff" stroke-width="2"/><rect x="18" y="0" width="18" height="14" fill="#e8a860"/><path d="M18 0l9 9 9-9" fill="none" stroke="#fff" stroke-width="2"/></svg></button>
    <button class="run" aria-label="MT4"><svg viewBox="0 0 30 30"><rect x="3" y="3" width="18" height="14" fill="#a8d4f4" stroke="#4a98d0"/><rect x="12" y="8" width="16" height="17" fill="#e0eef8" stroke="#3a88c8"/><path d="M16 14v7M20 11v8M24 13v8" stroke="#2a70b8"/><circle cx="8" cy="14" r="5" fill="#e89040"/><path d="M2 28q0-9 6-9t6 9z" fill="#5aa830"/><path d="M6 19l2 5 2-5z" fill="#fff"/></svg></button>
    <button class="run" aria-label="Document"><svg viewBox="0 0 30 30"><path d="M5 1h14l7 7v21H5z" fill="#f8f8f8"/><path d="M19 1v7h7z" fill="#aaa"/></svg></button>
    <button aria-label="Media player"><svg viewBox="0 0 30 30"><circle cx="15" cy="15" r="13" fill="#2c2c30" stroke="#f08a5a" stroke-width="2"/><path d="M28 15a13 13 0 0 1-26 0" fill="none" stroke="#9a68c8" stroke-width="2"/><path d="M11 9v12l10-6z" fill="#fff"/></svg></button>
    <button class="run" aria-label="Discord"><svg viewBox="0 0 30 30"><circle cx="15" cy="15" r="14" fill="#5865f2"/><path d="M8 9q7-3 14 0 3 5 3 10l-5 3-2-3h-6l-2 3-5-3q0-5 3-10z" fill="#fff"/><circle cx="12" cy="15" r="2" fill="#5865f2"/><circle cx="18" cy="15" r="2" fill="#5865f2"/></svg><b class="pink">6</b></button>
    <button class="run" aria-label="MT4"><svg viewBox="0 0 30 30"><rect x="3" y="3" width="18" height="14" fill="#a8d4f4" stroke="#4a98d0"/><rect x="12" y="8" width="16" height="17" fill="#e0eef8" stroke="#3a88c8"/><path d="M16 14v7M20 11v8M24 13v8" stroke="#2a70b8"/><circle cx="8" cy="14" r="5" fill="#e89040"/><path d="M2 28q0-9 6-9t6 9z" fill="#5aa830"/><path d="M6 19l2 5 2-5z" fill="#fff"/></svg></button>
    <button class="run" aria-label="IG"><svg viewBox="0 0 30 30"><rect width="30" height="30" fill="#e00a14"/><text x="15" y="23" font-size="21" text-anchor="middle" class="sans" fill="#fff">IG</text></svg></button>
    <button class="run hot" aria-label="Telegram"><svg viewBox="0 0 30 30"><circle cx="15" cy="15" r="14" fill="#2f9ad8"/><path d="M5 15 23 8l-3 15-6-5z" fill="#fff"/></svg><b class="sqr">..66</b></button>
    <button class="run" aria-label="P"><svg viewBox="0 0 18 20"><use href="#t-p"/></svg></button>
    <button aria-label="P"><svg viewBox="0 0 18 20"><use href="#t-p"/></svg></button>
    <button class="run" aria-label="Spotify"><svg viewBox="0 0 30 30"><circle cx="15" cy="15" r="14" fill="#1ed760"/><path d="M6 10q10-3 18 2M7 15q9-3 16 2M8 20q8-2 13 2" fill="none" stroke="#111" stroke-width="2.500"/></svg></button>
    <button aria-label="Z"><svg viewBox="0 0 30 30"><rect width="30" height="30" fill="#fff"/><path d="M5 12q1-9 10-9 9 1 10 7 0 4-6 6l-4 3q4 3 10 0-3 9-12 9-9-1-9-6 1-4 8-7l2-3q-3-3-9 0z" fill="#0f68b0"/></svg></button>
    <button aria-label="P"><svg viewBox="0 0 18 20"><use href="#t-p"/></svg></button>
    <button class="run" aria-label="Word"><svg viewBox="0 0 30 30"><rect x="8" y="1" width="21" height="28" rx="2" fill="#2b7cd3"/><path d="M8 1h21v7H8z" fill="#41a5ee"/><path d="M8 20h21v9H8z" fill="#103f91"/><rect y="7" width="16" height="16" rx="1" fill="#185abd"/><text x="8" y="20" font-size="13" text-anchor="middle" class="b" fill="#fff">W</text></svg></button>
    <button class="run" aria-label="Chrome"><svg viewBox="0 0 30 30"><circle cx="15" cy="15" r="14" fill="#ffcd40"/><path d="M15 15 3 8a14 14 0 0 1 24 0z" fill="#e33b2e"/><path d="M15 15 3 8a14 14 0 0 0 11 21z" fill="#0f9d58"/><circle cx="15" cy="15" r="6.500" fill="#4285f4" stroke="#fff" stroke-width="2"/></svg></button>
    <button class="run" aria-label="Excel"><svg viewBox="0 0 30 30"><rect x="8" y="1" width="21" height="28" rx="2" fill="#21a366"/><path d="M18 1h11v9H18z" fill="#33c481"/><path d="M8 19h21v10H8z" fill="#185c37"/><rect y="7" width="16" height="16" rx="1" fill="#107c41"/><text x="8" y="20" font-size="13" text-anchor="middle" class="b" fill="#fff">X</text></svg></button>
    <button class="run" aria-label="Photos"><svg viewBox="0 0 30 30"><rect x="2" y="2" width="26" height="26" rx="3" fill="#1a5fc0"/><path d="M2 27 14 10l14 17z" fill="#5cc4f8"/><circle cx="22" cy="7" r="2" fill="#fff"/></svg></button>
    <button class="run" aria-label="WinRAR"><svg viewBox="0 0 30 30"><path d="M3 4 8 2l19 2v21l-9 3L4 24z" fill="#c8202c"/><path d="M3 4l5 1v19l-4-1z" fill="#8a3ac0"/><path d="M8 5l5 1v20l-5-2z" fill="#f0c020"/><path d="M13 6l5 1v21l-5-2z" fill="#e04a28"/><path d="M3 17l15 3v4L3 20z" fill="#a8561c"/><rect x="9" y="16" width="6" height="7" fill="#ffd84a" stroke="#7a4a10"/></svg></button>
  </div>
  <div class="tray">
    <svg width="13" height="8" viewBox="0 0 13 8"><path d="M1 7l6-6 5 6" stroke="#fff" stroke-width="2" fill="none"/></svg>
    <svg width="20" height="16" viewBox="0 0 20 16" fill="none" stroke="#fff" stroke-width="1.500"><path d="M1 6q9-9 18 0M4 9q6-6 12 0M7 12q3-3 6 0"/><circle cx="10" cy="14" r="1"/></svg>
    <svg width="20" height="16" viewBox="0 0 20 16" fill="none" stroke="#fff" stroke-width="1.500"><path d="M1 5h3l5-4v14l-5-4H1zM12 5q2 3 0 6M14 3q4 5 0 10M17 1q4 7 0 14"/></svg>
    <svg width="20" height="18" viewBox="0 0 20 18"><rect x="3" y="5" width="14" height="11" rx="2" fill="none" stroke="#fff" stroke-width="1.500"/><rect x="6" y="8" width="9" height="6" fill="#fff"/><path d="M19 8v5" stroke="#fff" stroke-width="2"/><path d="M2 1v3M6 1v3M1 4h6v4H1z" stroke="#fff" fill="#fff"/></svg>
    <time>13:07<br>01/11/2023</time>
  </div>
</footer>
</body>
</html>
```

FILE: styles.css
```css
* { box-sizing: border-box; }
body { margin: 0; min-height: 100vh; display: flex; flex-direction: column; font: 16px/20px "Noto Sans", sans-serif; background: #f7f7f7; color: #111; }
button, input, select { font: inherit; color: inherit; margin: 0; padding: 0; border: 0; background: none; border-radius: 0; }
a { color: inherit; text-decoration: none; }
svg { display: block; flex: none; }
h1, h2, h3 { margin: 0; font-weight: 400; }
.defs { position: absolute; width: 0; height: 0; }
.symbols { display: none; }
.ln { fill: none; stroke: #111; stroke-width: 1.5px; }
.gray { stroke: #666; }
.b { font-family: "Open Sans", sans-serif; font-weight: 800; }
.sb { font-family: "Liberation Serif", serif; font-weight: 700; }
.sans { font-family: "Open Sans", sans-serif; font-weight: 600; }
.browser { flex: 1; display: flex; flex-direction: column; }

/* tab strip */
.tabs { display: flex; height: 40px; background: #cdcdcd; }
.tabs .tool { width: 42px; display: grid; place-items: center; }
.tabs .tool:first-child { width: 64px; }
.strip { display: flex; padding-top: 8px; height: 32px; }
.strip i { width: 20px; border-right: 1px solid #666; display: grid; place-items: center; }
.strip i svg { width: 18px; height: 20px; opacity: .55; }
.strip .vivid svg { opacity: 1; }
.slim i { width: 19px; }
.lead { margin-left: 7px; border-left: 1px solid #666; width: 121px; }
.active { width: 30px; background: #f7f7f7; border-radius: 8px 8px 0 0; display: grid; place-items: center; }
.group { display: flex; margin: 0 -12px 0 7px; border-top: 3px solid #2a6fec; height: 6px; width: 166px; }
.group .strip { padding-top: 5px; height: 29px; margin-left: 8px; }
.chip { flex: none; width: 66px; height: 24px; margin-top: 5px; background: #2a6fec; border-radius: 5px; color: #fff; font: 15px/22px "Open Sans", sans-serif; }
.plus { margin-left: 1px; }
.wincontrols { margin-left: auto; display: flex; }
.wincontrols button { width: 57px; display: grid; place-items: center; }

/* toolbar */
.toolbar { display: flex; align-items: center; height: 46px; padding: 2px 0 0 8px; }
.toolbar button { width: 56px; height: 40px; display: grid; place-items: center; flex: none; }
.toolbar button:last-child { width: 54px; }
.toolbar .nav { width: 54px; }
.nav:first-child .ln { stroke: #c8c8c8; }
.nav + .nav .ln { stroke-width: 2px; }
.address { flex: 1; margin-left: 9px; height: 37px; border-radius: 18px; background: #fff; box-shadow: 0 0 4px #ddd; display: flex; align-items: center; gap: 30px; padding: 0 20px 0 24px; }
.url { font: 16px/24px "Noto Sans", sans-serif; color: #707070; margin-left: -9px; }
.url b { font-weight: 400; color: #111; }
.address input { flex: 1; min-width: 0; outline: 0; }
.toolbar .ext { width: 66px; height: 24px; border-right: 2px solid #ccc; }

/* bookmarks */
.bookmarks { display: flex; align-items: center; gap: 23px; height: 44px; padding: 0 80px 0 17px; font: 14px/20px "Noto Sans", sans-serif; }
.bookmarks a { display: flex; align-items: center; gap: 10px; white-space: nowrap; }
.bookmarks button { margin-left: auto; }

.body { flex: 1; display: flex; }
.page { flex: 1; margin: 0 0 5px 5px; background: #444; border-radius: 9px; display: flex; flex-direction: column; box-shadow: 0 0 3px #888; min-width: 0; }

/* page header */
.head { display: flex; height: 102px; border-bottom: 1px solid #111; border-radius: 9px 9px 0 0; background: linear-gradient(#656565, #393939); }
.left { width: 330px; display: flex; gap: 6px; align-items: center; flex: none; }
.brand { writing-mode: vertical-rl; transform: rotate(180deg); font: 20px/24px "Noto Sans", sans-serif; color: #7c7c7c; height: 92px; margin: 1px 67px 0 0; align-self: flex-start; flex: none; }
.dl { width: 63px; height: 35px; border: 1px solid #0c1420; background: linear-gradient(#6480b0, #3c5880); box-shadow: 0 0 3px #111; color: #fff; font: 700 18px/24px "Noto Sans", sans-serif; text-shadow: 0 0 2px #000, 1px 1px 1px #000, -1px -1px 1px #000, 1px -1px 1px #000, -1px 1px 1px #000; margin-top: 20px; border-radius: 2px; }
.dl.yellow { color: #f8e840; margin-left: 2px; }
.events { align-self: flex-end; margin-bottom: -1px; height: 41px; display: flex; padding: 5px 18px 0 22px; background: #444; border: 1px solid #111; border-bottom: 0; border-radius: 20px 20px 0 0; color: #bbb; width: 757px; }
.cap { width: 67px; font: 18px/28px "Noto Sans", sans-serif; text-shadow: 0 -1px #111, 1px 0 #999; }
.evs { display: flex; height: 28px; border: 1px solid #666; flex: 1; }
.evs button { font: 23px/26px "Liberation Serif", serif; color: #1a1a1a; background: linear-gradient(#ababab, #777); border-right: 1px solid #555; padding-right: 5px; flex: 5 1 0; white-space: nowrap; }
.evs .w2 { flex: 6 1 0; }
.evs button:last-child { border-right: 0; }
.evs .on { background: linear-gradient(#ffa878, #d84408); padding-right: 0; }
.evs small { font-size: 20px; color: #d8a080; text-shadow: 1px 1px 1px #111; }
.right { flex: 1; display: flex; flex-direction: column; align-items: flex-end; padding: 1px 7px 0 0; }
.links { display: flex; gap: 14px; font-size: 16px; }
.links a { text-shadow: 0 0 1px currentColor; }
.links .ins { color: #c8ff00; font-weight: 700; font-size: 15px; }
.how { color: #ff6633; }
.forum { color: #9a96ff; }
.history { margin: 47px 21px 0 0; font: 700 19px/22px "Noto Sans", sans-serif; color: #bbb; }

/* canvas */
.canvas { position: relative; flex: 1; min-height: 560px; }
.canvashead { display: flex; justify-content: space-between; padding: 4px 28px 0 11px; }
h1 { font: italic 28px/22px "Liberation Serif", serif; color: #bbb; }
.wrench { width: 64px; height: 64px; border: 3px solid #333; border-radius: 10px; background: linear-gradient(#6e6e6e, #9a9a9a); box-shadow: inset 0 0 3px #bbb; overflow: hidden; }
.wires { position: absolute; left: 0; top: 1px; }
.node { position: absolute; height: 24px; display: flex; border-radius: 12px; background: #555; box-shadow: 0 0 12px #111; color: #222; }
.node::before, .node::after { content: ""; position: absolute; width: 22px; height: 11px; }
.node::before { left: calc(var(--p) - 11px); top: -11px; border-radius: 11px 11px 0 0; background: linear-gradient(#f8e8fa, #8a7c8e); }
.node::after { left: calc(var(--p) - 11px); top: 24px; width: calc(var(--q) - var(--p) + 22px); background: radial-gradient(circle at 11px 0, #f55c00 10.5px, transparent 11px), radial-gradient(circle at calc(100% - 11px) 0, var(--no, #f0c000) 10.5px, transparent 11px); }
.node em { width: 19px; padding-left: 7px; font: 14px/23px "Noto Sans", sans-serif; color: #aaa; flex: none; }
.node span { flex: 1; background: #b0e283; border-radius: 12px; text-align: center; line-height: 23px; white-space: nowrap; }
.cond span { background: #ffdba8; }
.buy span { background: #008000; }
.sell span { background: #f00; }
.buy, .sell { --no: #888; color: #fff; font-weight: 700; }
.n1 { left: 89px; top: 91px; width: 137px; --p: 69px; --q: 103px; }
.n2 { left: 103px; top: 173px; width: 114px; --p: 57px; --q: 86px; }
.n3 { left: 28px; top: 262px; width: 110px; --p: 55px; --q: 83px; }
.n4 { left: 186px; top: 262px; width: 110px; --p: 55px; --q: 83px; }
.n7 { left: 21px; top: 359px; width: 121px; --p: 60px; --q: 91px; }
.n8 { left: 179px; top: 359px; width: 121px; --p: 60px; --q: 91px; }
.n5 { left: 28px; top: 455px; width: 102px; --p: 51px; --q: 76px; }
.n6 { left: 186px; top: 455px; width: 99px; --p: 49px; --q: 74px; }

/* dialog window */
.dialog { position: absolute; left: 333px; top: 114px; width: 767px; border: 1px solid #111; border-radius: 8px; background: #444; box-shadow: 0 0 16px #111; color: #ddd; padding-bottom: 8px; }
.bar { display: flex; align-items: center; gap: 8px; height: 32px; padding-left: 6px; border-bottom: 1px solid #111; border-radius: 8px 8px 0 0; background: linear-gradient(#222, #606060 50%, #222); }
.bar h2 { font-size: 16px; margin-left: 15px; padding-bottom: 2px; color: #ccc; }
.vars { position: absolute; left: 765px; top: 3px; width: 22px; height: 88px; writing-mode: vertical-rl; background: #556; border: 1px solid #111; border-radius: 0 6px 6px 0; color: #bbb; box-shadow: 4px 2px 10px #222; text-align: center; font-size: 17px; line-height: 20px; }
.cols { display: flex; gap: 8px; padding-left: 9px; height: 277px; align-items: flex-start; }
h3 { font: 14px/15px "Liberation Sans", sans-serif; color: #7c7c7c; text-align: center; }
.operand { width: 299px; }
.wide { width: 352px; }
.panel { border: 1px solid #222; border-radius: 4px; background: #444450; padding: 1px 0 5px; }
.pick { display: flex; align-items: center; height: 27px; width: max-content; margin-bottom: 1px; }
.pick select { appearance: none; background: #333; border: 1px solid #000; border-right: 0; height: 25px; padding: 0 9px 2px 8px; outline: 0; }
.pick.src { background: #333; height: 25px; margin: 1px 0 2px; border: 1px solid #000; border-left: 0; padding-left: 4px; }
.pick.src select { border: 0; background: none; height: 23px; padding: 0 6px 1px 5px; }
.pick.src i { margin-right: -1px; }
.pick i { width: 26px; height: 27px; border: 1px solid #111; border-radius: 0 2px 2px 0; background: linear-gradient(#555, #3a3a3a); display: grid; place-items: center; flex: none; }
.pick i::after { content: ""; border: 5px solid transparent; border-top: 6px solid #111; border-bottom: 0; }
.pick.round { margin: 0; }
.round select { border-radius: 4px 0 0 4px; padding-left: 7px; padding-right: 8px; }
.rows { display: flex; flex-direction: column; gap: 2px; padding: 6px 6px 0; }
.row { display: flex; align-items: center; padding-right: 4px; }
.row label { flex: 1; padding-bottom: 2px; }
.sq { width: 16px; height: 16px; margin-left: 3px; background: #555; border: 1px solid #222; border-radius: 3px; }
.sq.off { background: none; border-color: #3e3e48; }
.num { width: 34px; height: 24px; padding: 0 6px 1px; background: #333; border: 1px solid #000; border-radius: 4px; }
.tag { height: 24px; padding: 0 4px 1px 4px; background: #9a4524; border: 1px solid #000; border-radius: 5px; color: #b8ada4; font-size: 17px; line-height: 20px; }
.more { height: 20px; border: 1px solid #332; border-bottom: 1px dotted #775; border-radius: 8px 8px 0 0; background: linear-gradient(#556, #334); color: #bbb98a; font: 700 12px/17px "DejaVu Sans", sans-serif; text-shadow: 0 1px #111; }
.more + .more { margin-top: 1px; }
.cmp { width: 79px; height: 41px; display: flex; align-items: center; border: 1px solid #000; border-radius: 5px; background: #333; padding: 0 6px 0 21px; }
.cmp select { appearance: none; flex: 1; font-size: 24px; outline: 0; min-width: 0; }
.status { display: flex; align-items: center; height: 34px; margin: 0 4px 0 3px; padding-left: 7px; background: #455; border-left: 1px solid #332; border-bottom: 1px solid #332; color: #9aa; }
.status label { width: 156px; padding-bottom: 2px; text-shadow: 0 0 1px currentColor; }
.status input[type=checkbox] { width: 18px; height: 18px; margin-right: 11px; }
.stval { width: 68px; height: 25px; background: #666; border: 1px solid #111; border-radius: 4px; }
.acts { display: flex; justify-content: space-between; padding: 7px 37px 0 40px; }
.acts button { height: 24px; border: 1px solid #111; border-radius: 7px; background: linear-gradient(#555, #3a3a3a); text-shadow: 0 0 1px currentColor; line-height: 20px; }
.upd { width: 324px; color: #3a3; }
.del { width: 288px; color: #c00; }

/* variable picker */
.popup { position: absolute; left: 1070px; top: 280px; width: 398px; padding: 3px; background: #999; border: 1px dotted #000; color: #333; display: flex; flex-direction: column; }
.popup > a { line-height: 20px; margin-bottom: 5px; color: #222; }
.popup > button { height: 18px; line-height: 15px; background: #333; color: #eee; border: 1px solid #000; border-radius: 4px; margin-bottom: 3px; }
.tables { display: flex; align-items: flex-start; border: 1px solid #000; background: #aaa; min-height: 139px; }
table { border-spacing: 0; }
td, th { padding: 0; }
caption { font-size: 14px; line-height: 15px; color: #444; }
th { font: italic 14px/15px "Noto Sans", sans-serif; color: #6c6c6c; border-bottom: 1px solid #333; white-space: nowrap; }
.consts { width: 255px; padding: 2px 2px 0; flex: none; }
.consts th:first-child { width: 166px; }
.consts td { height: 25px; padding-top: 1px; line-height: 20px; vertical-align: top; }
.consts td + td { border-bottom: 1px dotted #888; padding-left: 7px; }
.consts .tag { display: block; height: 24px; }
.varcol { flex: 1; align-self: stretch; border-left: 1px solid #000; display: grid; place-items: center; }
.varcol th + th { padding-left: 10px; }

/* sidebar */
.side { width: 55px; display: flex; flex-direction: column; align-items: center; gap: 26px; padding-top: 13px; margin-top: -40px; flex: none; }
.side svg { width: 24px; height: 24px; }
.side .add { margin-top: 5px; }
.bottom { margin-top: auto; border-top: 1px solid #ccc; width: 36px; display: flex; flex-direction: column; align-items: center; gap: 26px; padding: 16px 0 16px; }

/* taskbar */
.taskbar { display: grid; grid-template-columns: 1fr auto 1fr; height: 60px; background: linear-gradient(90deg, #2a1f48, #1b293c 30%, #15302c 55%, #173022); color: #fff; font: 14px/20px "Noto Sans", sans-serif; border-top: 1px solid #333; }
.weather { position: relative; padding: 4px 0 0 12px; }
.weather b { position: absolute; left: 27px; top: 8px; width: 20px; height: 20px; border-radius: 10px; background: #c42b1c; text-align: center; font-weight: 400; line-height: 19px; }
.apps { display: flex; }
.apps button { position: relative; width: 55px; display: grid; place-items: center; border-radius: 5px; }
.apps svg { width: 30px; height: 30px; }
.apps .wideicon svg { width: 36px; }
.run::after { content: ""; position: absolute; left: 24px; bottom: 5px; width: 8px; height: 4px; border-radius: 2px; background: #999; }
.cur { background: #ffffff16; box-shadow: inset 0 0 0 1px #ffffff18; }
.cur::after { left: 18px; width: 20px; background: #4cc2ff; }
.hot { background: #ff404038; }
.hot::after { background: #f88; }
.apps b { position: absolute; right: 4px; top: 8px; width: 20px; height: 20px; border-radius: 10px; font-weight: 400; line-height: 19px; background: #4cc2ff; color: #111; }
.apps .pink { background: #e85050; color: #fff; }
.apps .sqr { background: #e04040; color: #fff; font-size: 10px; border-radius: 6px; height: 15px; line-height: 14px; top: 12px; width: 22px; }
.tray { display: flex; align-items: center; justify-content: flex-end; gap: 10px; padding-right: 23px; }
.tray svg:first-child { margin-right: 14px; }
.tray time { text-align: right; margin-left: 14px; }
```
